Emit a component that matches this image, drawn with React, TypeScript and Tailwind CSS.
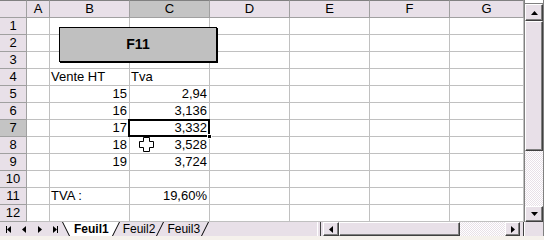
import React from 'react';

type Row = { n: number; b?: string; c?: string; bLeft?: boolean; cLeft?: boolean };

const rows: Row[] = [
    { n: 1 },
    { n: 2 },
    { n: 3 },
    { n: 4, b: 'Vente HT', c: 'Tva', bLeft: true, cLeft: true },
    { n: 5, b: '15', c: '2,94' },
    { n: 6, b: '16', c: '3,136' },
    { n: 7, b: '17', c: '3,332' },
    { n: 8, b: '18', c: '3,528' },
    { n: 9, b: '19', c: '3,724' },
    { n: 10 },
    { n: 11, b: 'TVA :', bLeft: true, c: '19,60%' },
    { n: 12 },
];

const colLetters = ['A', 'B', 'C', 'D', 'E', 'F', 'G'];

const raised =
    'border border-t-white border-l-white border-r-[#404040] border-b-[#404040] shadow-[inset_-1px_-1px_0_#808080] bg-[#e8e0e8]';
const checker = 'bg-[repeating-conic-gradient(#ffffff_0_25%,#e8e0e8_0_50%)] bg-size-[2px_2px]';

const Tri: React.FC<{ dir: 'up' | 'down' | 'left' | 'right' }> = ({ dir }) => {
    const pts = {
        up: '0,4 3.5,0 7,4',
        down: '0,0 7,0 3.5,4',
        left: '4,0 4,7 0,3.5',
        right: '0,0 4,3.5 0,7',
    }[dir];
    const vertical = dir === 'up' || dir === 'down';
    return (
        <svg width={vertical ? 7 : 4} height={vertical ? 4 : 7} viewBox={vertical ? '0 0 7 4' : '0 0 4 7'}>
            <polygon points={pts} fill="#000" />
        </svg>
    );
};

const Slant: React.FC<{ back?: boolean; fillLeft?: boolean; fillRight?: boolean }> = ({ back, fillLeft, fillRight }) => (
    <svg width="8" height="14" viewBox="0 0 8 14" className="shrink-0">
        {fillRight && <polygon points="0,0 8,0 8,14" fill="#fff" />}
        {fillLeft && <polygon points="0,0 8,0 0,14" fill="#fff" />}
        {back ? (
            <line x1="0.5" y1="0" x2="7.5" y2="14" stroke="#000" strokeWidth="1" />
        ) : (
            <line x1="0.5" y1="14" x2="7.5" y2="0" stroke="#000" strokeWidth="1" />
        )}
    </svg>
);

const App: React.FC = () => {
    return (
        <div className="w-[544px] h-[240px] flex flex-col bg-[#f5f1ec] font-['Liberation_Sans',Arial,sans-serif] text-black overflow-hidden">
            <div className="flex h-[222px]">
                {/* sheet grid */}
                <div className="relative w-[524px] grid grid-cols-[27px_23px_80px_80px_80px_80px_80px_74px] auto-rows-[17px] grid-rows-[18px] bg-white">
                    <div className="bg-[#e8e0e8] border-t border-t-[#808080] border-r border-b border-[#a0a0a0]" />
                    {colLetters.map(l => (
                        <div
                            key={l}
                            className={`flex items-center justify-center text-[13px] leading-[16px] border-t border-t-[#808080] border-r border-b border-[#a0a0a0] ${l === 'C' ? 'bg-[#c4c4c4]' : 'bg-[#e8e0e8]'}`}
                        >
                            {l}
                        </div>
                    ))}

                    {rows.map(r => (
                        <React.Fragment key={r.n}>
                            <div
                                className={`flex items-center justify-center text-[13px] leading-[16px] border-r border-b border-[#a0a0a0] ${r.n === 7 ? 'bg-[#c4c4c4]' : 'bg-[#e8e0e8]'}`}
                            >
                                {r.n}
                            </div>
                            <div className="border-r border-b border-[#c0c0c0]" />
                            <div
                                className={`flex items-center px-[2px] text-[13px] leading-[16px] whitespace-nowrap border-r border-b border-[#c0c0c0] ${r.bLeft ? 'justify-start pl-[1px]' : 'justify-end'}`}
                            >
                                {r.b}
                            </div>
                            <div
                                className={`relative flex items-center px-[2px] text-[13px] leading-[16px] whitespace-nowrap border-r border-b border-[#c0c0c0] ${r.cLeft ? 'justify-start pl-[1px]' : 'justify-end'} ${r.n === 7 ? 'z-10' : ''}`}
                            >
                                {r.c}
                                {r.n === 7 && (
                                    <>
                                        <div className="absolute -left-[2px] -top-[1px] -right-[1px] -bottom-[1px] border-2 border-black" />
                                        <div className="absolute -right-[3px] -bottom-[3px] w-[5px] h-[5px] bg-black border border-white" />
                                    </>
                                )}
                            </div>
                            <div className="border-r border-b border-[#c0c0c0]" />
                            <div className="border-r border-b border-[#c0c0c0]" />
                            <div className="border-r border-b border-[#c0c0c0]" />
                            <div className="border-r border-b border-[#c0c0c0]" />
                        </React.Fragment>
                    ))}

                    {/* F11 button drawn over the sheet */}
                    <div className="absolute left-[59px] top-[27px] w-[158px] h-[35px] flex items-center justify-center bg-[#c0c0c0] border border-black shadow-[1px_1px_0_#000] text-[14px] font-bold">
                        F11
                    </div>

                    {/* mouse cursor */}
                    <svg className="absolute left-[139px] top-[137px] z-20" width="15" height="15" viewBox="0 0 15 15">
                        <polygon
                            points="4.5,0.5 10.5,0.5 10.5,4.5 14.5,4.5 14.5,10.5 10.5,10.5 10.5,14.5 4.5,14.5 4.5,10.5 0.5,10.5 0.5,4.5 4.5,4.5"
                            fill="#fff"
                            stroke="#000"
                            strokeWidth="1"
                        />
                    </svg>
                </div>

                {/* vertical scrollbar */}
                <div className="w-[20px] flex flex-col border-l border-[#808080] border-r border-r-[#808080] bg-[#e8e0e8]">
                    <div className="h-[4px] bg-white border-b border-[#808080]" />
                    <div className={`h-[17px] flex items-center justify-center ${raised}`}>
                        <Tri dir="up" />
                    </div>
                    <div className={`h-[130px] ${raised}`} />
                    <div className={`flex-1 ${checker}`} />
                    <div className={`h-[16px] flex items-center justify-center ${raised}`}>
                        <Tri dir="down" />
                    </div>
                </div>
            </div>

            {/* sheet tabs + horizontal scrollbar */}
            <div className="flex h-[14px] bg-[#e8e0e8] text-[12px] leading-[14px]">
                <div className="w-[62px] flex items-center">
                    <div className="w-[16px] flex items-center justify-center gap-0">
                        <div className="w-[1px] h-[7px] bg-black" />
                        <Tri dir="left" />
                    </div>
                    <div className="w-[16px] flex items-center justify-center">
                        <Tri dir="left" />
                    </div>
                    <div className="w-[16px] flex items-center justify-center">
                        <Tri dir="right" />
                    </div>
                    <div className="w-[14px] flex items-center justify-center">
                        <Tri dir="right" />
                        <div className="w-[1px] h-[7px] bg-black" />
                    </div>
                </div>
                <Slant back fillRight />
                <div className="bg-white pl-[4px] pr-[3px] font-bold">Feuil1</div>
                <Slant fillLeft />
                <div className="pl-[3px] pr-[1px]">Feuil2</div>
                <Slant />
                <div className="pl-[3px] pr-[1px]">Feuil3</div>
                <Slant />
                <div className="flex-1" />
                <div className="w-[4px] border-l border-l-white border-r border-r-[#404040] mr-[2px]" />
                <div className={`w-[16px] flex items-center justify-center ${raised}`}>
                    <Tri dir="left" />
                </div>
                <div className={`w-[121px] ${raised}`} />
                <div className={`w-[45px] ${checker}`} />
                <div className={`w-[15px] flex items-center justify-center ${raised}`}>
                    <Tri dir="right" />
                </div>
                <div className="w-[4px] border-r border-[#404040]" />
                <div className="w-[20px] bg-[#e8e0e8] border-l border-white border-r border-r-[#808080]" />
            </div>
            <div className="flex-1 bg-[#f5f1ec]" />
        </div>
    );
};

export default App;
